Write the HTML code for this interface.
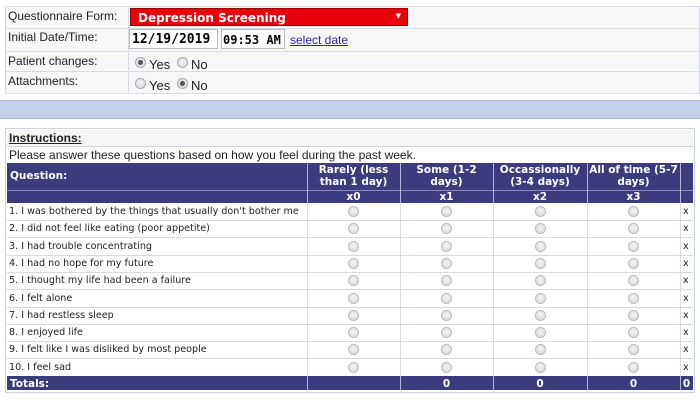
<!DOCTYPE html>
<html><head><style>
body{margin:0;width:700px;height:400px;background:#fff;position:relative;overflow:hidden;font-family:"Liberation Sans",sans-serif;}
.a{position:absolute;box-sizing:border-box}
.lab{font-size:12px;color:#222}
.r{position:absolute;width:11px;height:11px;border-radius:50%;border:1px solid #aaa;background:radial-gradient(circle at 50% 40%,#f4f4f4,#d4d4d4);box-sizing:border-box}
.sel::after{content:"";position:absolute;left:2px;top:2px;width:5px;height:5px;border-radius:50%;background:#555}
.v{font-family:"DejaVu Sans",sans-serif;font-size:9.6px;color:#222}
.h{background:#3b3b7e;color:#fff;font-family:"DejaVu Sans",sans-serif;font-weight:bold;font-size:10.5px;text-align:center;line-height:12px}
</style></head><body>
<div class="a" style="left:5px;top:6px;width:695px;height:88px;border:1px solid #d4dae6;background:#f7f7f7"></div>
<div class="a" style="left:5px;top:28px;width:695px;height:1px;background:#d4dae6"></div>
<div class="a" style="left:5px;top:51px;width:695px;height:1px;background:#d4dae6"></div>
<div class="a" style="left:5px;top:71px;width:695px;height:1px;background:#d4dae6"></div>
<div class="a" style="left:128px;top:6px;width:1px;height:88px;background:#d4dae6"></div>
<div class="a lab" style="left:8px;top:9px">Questionnaire Form:</div>
<div class="a lab" style="left:8px;top:30px">Initial Date/Time:</div>
<div class="a lab" style="left:8px;top:54px">Patient changes:</div>
<div class="a lab" style="left:8px;top:74px">Attachments:</div>
<div class="a" style="left:130px;top:8px;width:278px;height:18px;background:#e8000a;border:1px solid #900;color:#fff;font-family:'DejaVu Sans',sans-serif;font-weight:bold;font-size:12px;padding:2px 0 0 7px">Depression Screening<span style="position:absolute;right:6px;top:3px;font-size:7px">▼</span></div>
<div class="a" style="left:129px;top:29px;width:89px;height:20px;background:#fff;border:1px solid #bbb;font-family:'DejaVu Sans Mono',monospace;font-weight:bold;font-size:13px;padding:2px 0 0 2px">12/19/2019</div>
<div class="a" style="left:221px;top:29px;width:64px;height:20px;background:#fff;border:1px solid #bbb;font-family:'DejaVu Sans Mono',monospace;font-weight:bold;font-size:12px;padding:3px 0 0 1px;overflow:hidden;white-space:nowrap">09:53 AM</div>
<div class="a" style="left:290px;top:33px;font-size:12px;color:#2a2aa0;text-decoration:underline">select date</div>
<div class="r sel" style="left:135px;top:57px"></div><div class="a lab" style="left:149px;top:57px;font-size:13px">Yes</div>
<div class="r" style="left:177px;top:57px"></div><div class="a lab" style="left:191px;top:57px;font-size:13px">No</div>
<div class="r" style="left:135px;top:78px"></div><div class="a lab" style="left:149px;top:78px;font-size:13px">Yes</div>
<div class="r sel" style="left:177px;top:78px"></div><div class="a lab" style="left:191px;top:78px;font-size:13px">No</div>
<div class="a" style="left:0;top:100px;width:700px;height:19px;background:#c2d0e8;border-top:1px solid #a9bcdc;border-bottom:1px solid #a9bcdc"></div>
<div class="a" style="left:5px;top:128px;width:690px;height:265px;border:1px solid #ccd4e2;background:#fff"></div>
<div class="a" style="left:7px;top:130px;width:686px;height:16px;background:#f5f5f5"></div>
<div class="a" style="left:9px;top:131px;font-size:12px;font-weight:bold;text-decoration:underline;color:#222">Instructions:</div>
<div class="a" style="left:7px;top:146px;width:686px;height:1px;background:#ccd4e2"></div>
<div class="a" style="left:9px;top:148px;font-size:12px;color:#222">Please answer these questions based on how you feel during the past week.</div>
<div class="a" style="left:7px;top:163px;width:686px;height:40px;background:#3b3b7e"></div>
<div class="a h" style="left:10px;top:170px;text-align:left">Question:</div>
<div class="a h" style="left:307px;top:164px;width:93px">Rarely (less<br>than 1 day)</div>
<div class="a h" style="left:400px;top:164px;width:93px">Some (1-2<br>days)</div>
<div class="a h" style="left:493px;top:164px;width:94px">Occassionally<br>(3-4 days)</div>
<div class="a h" style="left:587px;top:164px;width:93px">All of time (5-7<br>days)</div>
<div class="a" style="left:7px;top:190px;width:686px;height:1px;background:#8a8ac0"></div>
<div class="a h" style="left:307px;top:191px;width:93px">x0</div>
<div class="a h" style="left:400px;top:191px;width:93px">x1</div>
<div class="a h" style="left:493px;top:191px;width:94px">x2</div>
<div class="a h" style="left:587px;top:191px;width:93px">x3</div>
<div id="rows"></div>
<div class="a" style="left:7px;top:376px;width:686px;height:14px;background:#3b3b7e"></div>
<div class="a h" style="left:10px;top:378px;text-align:left">Totals:</div>
<div class="a h" style="left:400px;top:378px;width:93px">0</div>
<div class="a h" style="left:493px;top:378px;width:94px">0</div>
<div class="a h" style="left:587px;top:378px;width:93px">0</div>
<div class="a h" style="left:680px;top:378px;width:13px">0</div>
<div class="a" style="left:307px;top:163px;width:1px;height:227px;background:#ccd4e2;opacity:.8"></div>
<div class="a" style="left:400px;top:163px;width:1px;height:227px;background:#ccd4e2;opacity:.8"></div>
<div class="a" style="left:493px;top:163px;width:1px;height:227px;background:#ccd4e2;opacity:.8"></div>
<div class="a" style="left:587px;top:163px;width:1px;height:227px;background:#ccd4e2;opacity:.8"></div>
<div class="a" style="left:680px;top:163px;width:1px;height:227px;background:#ccd4e2;opacity:.8"></div>
<script>
var q=["1. I was bothered by the things that usually don't bother me","2. I did not feel like eating (poor appetite)","3. I had trouble concentrating","4. I had no hope for my future","5. I thought my life had been a failure","6. I felt alone","7. I had restless sleep","8. I enjoyed life","9. I felt like I was disliked by most people","10. I feel sad"];
var h="";
for(var i=0;i<10;i++){var y=203+i*17.3;
h+='<div class="a" style="left:7px;top:'+(y+17)+'px;width:686px;height:1px;background:#d4dae6"></div>';
h+='<div class="a v" style="left:9px;top:'+(y+3)+'px;white-space:nowrap">'+q[i]+'</div>';
[353,446,540,633].forEach(function(c){h+='<div class="r" style="left:'+(c-5)+'px;top:'+(y+3)+'px;border-color:#bbb"></div>';});
h+='<div class="a v" style="left:683px;top:'+(y+3)+'px">x</div>';}
document.getElementById("rows").outerHTML=h;
</script>
</body></html>
